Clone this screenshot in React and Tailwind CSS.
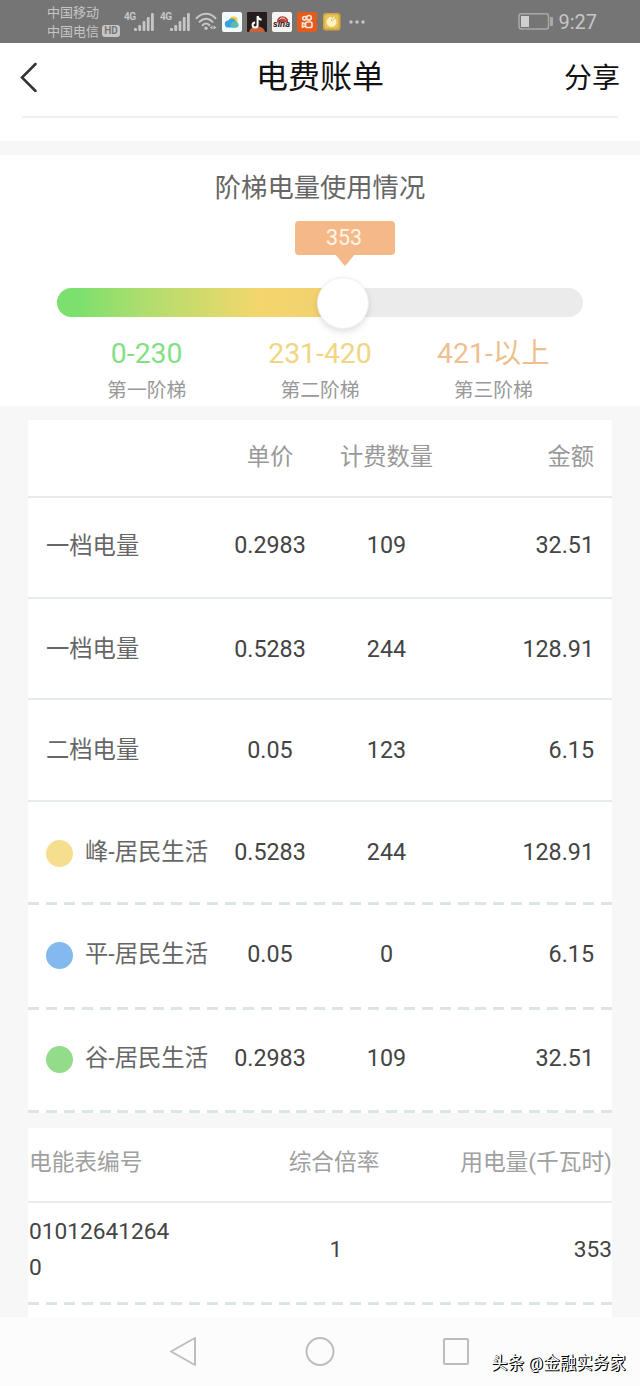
const tiers = [
  { range: '0-230', name: '第一阶梯', color: 'text-[#84df84]' },
  { range: '231-420', name: '第二阶梯', color: 'text-[#f0d684]' },
  { range: '421-以上', name: '第三阶梯', color: 'text-[#efbf8f]' },
]

const charges = [
  { name: '一档电量', price: '0.2983', qty: '109', amount: '32.51', row: 'h-[101px] pb-[5px]' },
  { name: '一档电量', price: '0.5283', qty: '244', amount: '128.91', row: 'h-[101px]' },
  { name: '二档电量', price: '0.05', qty: '123', amount: '6.15', row: 'h-[102px] pb-px' },
]

const periods = [
  { name: '峰-居民生活', price: '0.5283', qty: '244', amount: '128.91', dot: 'bg-[#f5df8f]', row: 'h-[100px] pb-px' },
  { name: '平-居民生活', price: '0.05', qty: '0', amount: '6.15', dot: 'bg-[#84b9f0]', row: 'h-[102px] pb-[5px]' },
  { name: '谷-居民生活', price: '0.2983', qty: '109', amount: '32.51', dot: 'bg-[#93dc89]', row: 'h-[100px] pb-[5px]' },
]

function Signal() {
  return (
    <div className="flex items-start">
      <span className="w-[10px] text-[10px] leading-[10px] font-bold tracking-tighter">4G</span>
      <svg width="20" height="18" viewBox="0 0 20 18" fill="currentColor" className="mt-px">
        <rect x="0" y="15" width="3" height="3" rx="1" />
        <rect x="4.3" y="12" width="2.8" height="6" rx="1" />
        <rect x="8.6" y="8" width="2.8" height="10" rx="1" />
        <rect x="12.8" y="4" width="2.8" height="14" rx="1" />
        <rect x="17" y="0" width="2.8" height="18" rx="1" />
      </svg>
    </div>
  )
}

function WifiIcon() {
  return (
    <svg width="23" height="19" viewBox="0 0 23 19" fill="none" stroke="currentColor" strokeWidth="2" strokeLinecap="round">
      <path d="M1.5 6.2C7.2 .3 15 .3 20.5 6.2" />
      <path d="M4.6 9.8C8.6 5.8 13.6 5.8 17.5 9.8" />
      <path d="M7.6 13.2C9.8 11 12.3 11 14.5 13.2" />
      <circle cx="11" cy="16.2" r="1.7" fill="currentColor" stroke="none" />
      <path d="M17.5 13.5v4l-2.5-2zM18.5 13.5v4l3-2z" fill="currentColor" stroke="none" />
    </svg>
  )
}

function AppIcons() {
  return (
    <div className="flex gap-[5px]">
      <svg width="20" height="20" viewBox="0 0 20 20">
        <rect width="20" height="20" rx="2" fill="#f3fafb" />
        <circle cx="11.5" cy="8.5" r="4" fill="#f3c93f" />
        <path d="M6.5 15.5a3.5 3.5 0 0 1-.3-7 4.3 4.3 0 0 1 7.8 1.2 3 3 0 0 1 .2 5.8z" fill="#3c9fe0" />
        <path d="M10 15.5a3.2 3.2 0 0 1 5-4.8 2.5 2.5 0 0 1-.5 4.8z" fill="#58bfae" />
      </svg>
      <svg width="20" height="20" viewBox="0 0 20 20">
        <rect width="20" height="20" rx="1" fill="#241c1d" />
        <path d="M2 20c1-4 4-5.5 8-5.5s7 1.5 8 5.5z" fill="#c9623a" />
        <path d="M10.6 4v9a2.5 2.5 0 1 1-2.5-2.5M10.6 4c.4 2.3 1.8 3.5 4 3.7" fill="none" stroke="#fff" strokeWidth="2" />
      </svg>
      <svg width="20" height="20" viewBox="0 0 20 20">
        <rect width="20" height="20" rx="2" fill="#f7f4f4" />
        <path d="M5 8.5c1-5 8-6 11-1v3H5z" fill="#b9443c" />
        <path d="M7.5 7.5c1.5-2 4.5-2 6 0" fill="none" stroke="#f7f4f4" />
        <text x="1" y="14.5" fontSize="9" fontWeight="700" fontStyle="italic" fill="#3a2426" textLength="17" lengthAdjust="spacingAndGlyphs">sina</text>
      </svg>
      <svg width="20" height="20" viewBox="0 0 20 20">
        <rect width="20" height="20" rx="2" fill="#e65a1c" />
        <g fill="none" stroke="#fbe3d5" strokeWidth="1.7">
          <circle cx="7.5" cy="6.3" r="1.8" />
          <circle cx="12" cy="5.8" r="2.3" />
          <rect x="8.5" y="10" width="6.5" height="5.5" rx="1.8" />
          <path d="M8.500 12l-3-1v4l3-1" />
        </g>
      </svg>
      <svg width="20" height="20" viewBox="0 0 20 20">
        <rect x="1" y="1" width="17.5" height="17.5" rx="3" fill="#d3a640" />
        <rect x="2.500" y="2.500" width="14" height="14" rx="3" fill="#e8c45c" />
        <ellipse cx="9.500" cy="10" rx="5" ry="5" fill="#fff3c4" />
        <path d="M9.500 9c0-3 1.500-5 4-6-.3 3-1.500 5-4 6z" fill="#fff3c4" stroke="#dfae45" strokeWidth=".7" />
      </svg>
    </div>
  )
}

function StatusBar() {
  return (
    <div className="flex h-[43px] items-center bg-[#757575] pl-[47px] pr-[43px] text-[#c6c6c6]">
      <div className="w-[77px] text-[13px] leading-[19px]">
        <div>中国移动</div>
        <div className="flex items-center gap-[3px]">
          中国电信
          <span className="h-[12px] w-[18px] rounded-[3px] bg-[#c6c6c6] text-center text-[10px] leading-[12px] font-bold text-[#757575]">HD</span>
        </div>
      </div>
      <div className="flex gap-1.5">
        <Signal />
        <Signal />
      </div>
      <div className="ml-[5px] flex items-center gap-[4px]">
        <WifiIcon />
        <AppIcons />
      </div>
      <svg width="16" height="4" viewBox="0 0 16 4" fill="currentColor" className="ml-[7px]">
        <circle cx="2" cy="2" r="1.7" />
        <circle cx="8" cy="2" r="1.7" />
        <circle cx="14" cy="2" r="1.7" />
      </svg>
      <svg width="36" height="17" viewBox="0 0 36 17" className="ml-auto">
        <rect x="1" y=".8" width="29.5" height="15.2" rx="2.5" fill="none" stroke="#a9a9a9" strokeWidth="1.5" />
        <rect x="3" y="3" width="8" height="11" fill="#cfcfcf" />
        <rect x="32" y="4" width="3" height="9" rx="1" fill="#a9a9a9" />
      </svg>
      <span className="ml-1 text-[20px] leading-6">9:27</span>
    </div>
  )
}

function TitleBar() {
  return (
    <div className="flex h-[73px] items-center justify-between bg-white px-5 pb-[5px] text-[#111]">
      <svg width="56" height="30" viewBox="0 0 56 30" fill="none" stroke="#333" strokeWidth="2.5" strokeLinecap="round">
        <path d="M15.5 2 2 15.5 15.5 29" />
      </svg>
      <h1 className="text-[32px] leading-10">电费账单</h1>
      <span className="pt-1 text-[28px] leading-10">分享</span>
    </div>
  )
}

function TierSlider() {
  return (
    <section className="h-[251px] bg-white pt-[15px]">
      <h2 className="text-center text-[26.3px] leading-9 text-[#666]">阶梯电量使用情况</h2>
      <div className="ml-[295px] mt-[15px] flex w-[100px] flex-col items-center">
        <div className="h-[34px] w-full rounded-[4px] bg-[#f5b888] pr-0.5 text-center text-[21.5px] leading-[33px] text-[#fff5e6]">353</div>
        <svg width="20" height="12" viewBox="0 0 20 12" className="-mt-px">
          <path d="M0 0h20L11 11q-1 1.5-2 0z" fill="#f5b888" />
        </svg>
      </div>
      <div className="relative mx-[57px] mt-[22px] h-[29px] rounded-full bg-[#ebebeb]">
        <div className="h-full w-[290px] rounded-l-full bg-linear-to-r from-[#7ce06e] from-8% via-[#f3d66c] via-70% to-[#f2cf72]" />
        <div className="absolute -top-[11px] left-[260px] size-[52px] rounded-full border border-[#f0f0f0] bg-white shadow-[0_3px_6px_rgba(0,0,0,0.12)]" />
      </div>
      <div className="mx-[60px] mt-[17px] grid grid-cols-3">
        {tiers.map((tier) => (
          <div key={tier.name} className="text-center">
            <div className={`text-[28.4px] leading-10 ${tier.color}`}>{tier.range}</div>
            <div className="text-[19.8px] leading-[33px] text-[#999]">{tier.name}</div>
          </div>
        ))}
      </div>
    </section>
  )
}

function DashedLine() {
  return <div className="h-[3px] bg-[repeating-linear-gradient(90deg,#dbe5e3_0_11px,transparent_11px_17.9px)]" />
}

function ChargeCells({ item }) {
  return (
    <>
      <span className="text-center text-[#444]">{item.price}</span>
      <span className="text-center text-[#444]">{item.qty}</span>
      <span className="text-right text-[#444]">{item.amount}</span>
    </>
  )
}

function ChargeTable() {
  return (
    <section className="mx-7 mt-[14px] bg-white text-[23.3px] leading-8">
      <div className="grid h-[78px] grid-cols-[166px_116px_117px_1fr] items-center border-b-2 border-[#e8eaea] px-[18px] pb-[3px] text-[#999]">
        <span />
        <span className="text-center">单价</span>
        <span className="text-center">计费数量</span>
        <span className="text-right">金额</span>
      </div>
      {charges.map((item, i) => (
        <div key={i} className={`grid grid-cols-[166px_116px_117px_1fr] items-center border-b-2 border-[#e5eaea] px-[18px] ${item.row}`}>
          <span className="pt-px text-[#666]">{item.name}</span>
          <ChargeCells item={item} />
        </div>
      ))}
      {periods.map((item) => (
        <div key={item.name}>
          <div className={`grid grid-cols-[166px_116px_117px_1fr] items-center px-[18px] ${item.row}`}>
            <span className="flex items-center gap-3 whitespace-nowrap text-[#666]">
              <i className={`mt-[3px] size-[27px] rounded-full ${item.dot}`} />
              {item.name}
            </span>
            <ChargeCells item={item} />
          </div>
          <DashedLine />
        </div>
      ))}
    </section>
  )
}

function MeterTable() {
  return (
    <section className="mx-7 mt-[15px] h-[189px] bg-white text-[22.7px] leading-9">
      <div className="grid h-[75px] grid-cols-[184px_244px_156px] items-center border-b-2 border-[#ebebeb] pb-[3px] text-[#a0a0a0]">
        <span className="pl-px">电能表编号</span>
        <span className="text-center">综合倍率</span>
        <span className="text-right">用电量(千瓦时)</span>
      </div>
      <div className="grid h-[99px] grid-cols-[184px_244px_156px] items-center pb-[5px] text-[#444]">
        <span className="w-[146px] pl-px break-all">010126412640</span>
        <span className="pl-1 text-center">1</span>
        <span className="text-right">353</span>
      </div>
      <DashedLine />
    </section>
  )
}

function NavBar() {
  return (
    <div className="relative flex h-[69px] items-center justify-center bg-[#fcfcfc]">
      <svg width="302" height="32" viewBox="0 0 302 32" fill="none" stroke="#bdbdbd" strokeWidth="2" strokeLinejoin="round">
        <path d="M26 2v27L2 15.5z" />
        <circle cx="151" cy="15.5" r="13.5" />
        <rect x="275" y="3" width="24" height="25" rx="1" />
      </svg>
      <span className="absolute left-[491px] top-[35px] text-[16.5px] leading-6 whitespace-nowrap text-white [text-shadow:1px_1px_0_#000,1px_0_0_#000]">
        头条 @金融实务家
      </span>
    </div>
  )
}

export default function App() {
  return (
    <div className="h-[1386px] w-[640px] overflow-hidden bg-[#f7f7f7] font-['Roboto','Noto_Sans_CJK_SC',sans-serif]">
      <StatusBar />
      <TitleBar />
      <div className="mb-[14px] h-[25px] bg-white px-[22px]">
        <div className="h-[2px] bg-[#f0f0f0]" />
      </div>
      <TierSlider />
      <ChargeTable />
      <MeterTable />
      <NavBar />
    </div>
  )
}
